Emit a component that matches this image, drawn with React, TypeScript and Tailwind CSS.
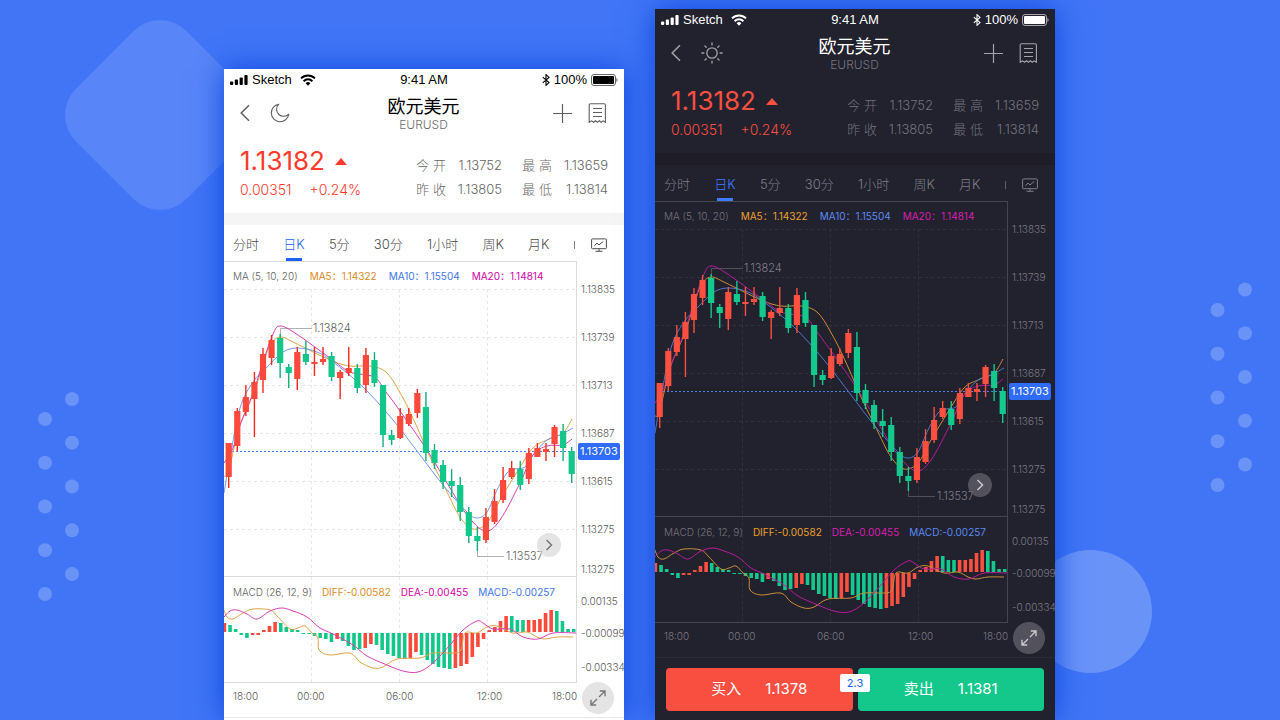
import { useState } from "react";

type Point = [number, number];
// up, body top, body bottom, wick top, wick bottom
type Candle = [boolean, number, number, number, number];

const themes = {
  light: {
    phone: "bg-white",
    status: "text-black",
    title: "text-black",
    subtitle: "text-[#6e6e6e]",
    icon: "text-[#5f5f5f]",
    price: "text-[#fb3a2b]",
    quote: "text-[#666666]",
    band: "bg-[#f5f5f5]",
    tab: "text-[#4c4c4c]",
    activeTab: "text-[#1b62ff]",
    activeBar: "bg-[#1b62ff]",
    border: "border-[#d9d9d9]",
    footer: "border-[#e8e8e8]",
    legend: "text-[#5f5f5f]",
    orange: "text-[#d98a1f]",
    blue: "text-[#3f74ea]",
    pink: "text-[#d400a5]",
    axis: "text-[#5a5a5a]",
    round: "bg-[#d8d8d8]/70 text-[#777777]",
    grid: "#e8e8e8",
    line: "#d9d9d9",
    note: "#5f5f5f",
    up: "#fb4a3c",
    down: "#13c78b",
    wickUp: "#f5281a",
    wickDown: "#0fae78",
    ma5: "#dfa345",
    ma10: "#6f9bf0",
    ma20: "#d63fb5",
  },
  dark: {
    phone: "bg-[#22212e]",
    status: "text-white",
    title: "text-white",
    subtitle: "text-[#74737d]",
    icon: "text-[#a3a3a9]",
    price: "text-[#fb4f3f]",
    quote: "text-[#74737d]",
    band: "bg-[#1d1c27]",
    tab: "text-[#7f7e88]",
    activeTab: "text-[#3b7cff]",
    activeBar: "bg-[#3b7cff]",
    border: "border-[#45444f]",
    footer: "border-[#2b2a36]",
    legend: "text-[#74737d]",
    orange: "text-[#eda22f]",
    blue: "text-[#5b8bf0]",
    pink: "text-[#d61fae]",
    axis: "text-[#7a7983]",
    round: "bg-[#5f5e68]/80 text-[#c9c9cd]",
    grid: "#31303c",
    line: "#45444f",
    note: "#7f7e88",
    up: "#fb4f3f",
    down: "#13c98d",
    wickUp: "#fb4f3f",
    wickDown: "#13c98d",
    ma5: "#c98f38",
    ma10: "#4f76c4",
    ma20: "#b81d97",
  },
};

type Theme = (typeof themes)["light"];

const candles: Candle[] = [
  [true, 181, 215, 181, 226],
  [true, 149, 184, 146, 189],
  [true, 135, 150, 123, 154],
  [true, 120, 137, 110, 175],
  [true, 92, 118, 86, 131],
  [true, 78, 96, 73, 103],
  [false, 76, 101, 72, 116],
  [false, 105, 111, 102, 126],
  [true, 90, 117, 85, 128],
  [false, 92, 100, 79, 103],
  [true, 100, 102, 85, 114],
  [true, 97, 100, 85, 103],
  [false, 94, 115, 90, 119],
  [true, 110, 116, 108, 137],
  [true, 106, 111, 85, 114],
  [false, 106, 126, 102, 131],
  [true, 93, 123, 86, 131],
  [false, 98, 121, 90, 125],
  [false, 123, 173, 123, 185],
  [false, 173, 178, 168, 183],
  [true, 154, 176, 146, 177],
  [true, 152, 162, 146, 164],
  [true, 131, 151, 127, 156],
  [false, 145, 191, 130, 199],
  [false, 188, 201, 182, 207],
  [false, 203, 220, 198, 227],
  [false, 219, 224, 207, 235],
  [false, 223, 250, 215, 259],
  [false, 250, 274, 245, 281],
  [false, 274, 279, 265, 289],
  [true, 255, 278, 246, 281],
  [true, 239, 260, 227, 262],
  [true, 218, 238, 205, 241],
  [true, 206, 215, 199, 217],
  [false, 207, 223, 199, 228],
  [true, 191, 217, 186, 222],
  [true, 186, 195, 181, 195],
  [true, 187, 190, 181, 199],
  [true, 165, 182, 163, 195],
  [false, 169, 186, 162, 199],
  [false, 189, 212, 185, 221],
];

const ma5: Point[] = [
  [0, 214], [4, 212], [10, 186], [16, 163], [29, 133], [39, 103], [46, 83], [56, 75],
  [71, 81], [106, 98], [126, 104], [146, 104], [163, 111], [179, 136], [193, 165],
  [206, 195], [223, 230], [236, 255], [249, 267], [263, 261], [276, 238], [293, 210],
  [309, 186], [323, 178], [339, 171], [348, 157],
];
const ma10: Point[] = [
  [0, 231], [6, 196], [16, 146], [29, 120], [43, 105], [59, 90], [74, 86], [93, 90],
  [109, 100], [139, 125], [169, 158], [196, 193], [219, 223], [243, 250], [253, 256],
  [263, 250], [273, 228], [283, 211], [291, 207], [301, 205], [309, 193], [323, 178],
  [336, 173], [349, 166],
];
const ma20: Point[] = [
  [0, 201], [9, 186], [16, 163], [29, 131], [39, 100], [49, 72], [56, 64], [71, 71],
  [106, 96], [126, 110], [150, 115], [162, 130], [176, 149], [203, 188], [226, 226],
  [243, 253], [261, 269], [276, 258], [296, 221], [309, 193], [323, 184], [339, 183],
  [348, 177],
];

const diff: Point[] = [
  [0, 348], [3, 355], [9, 357], [19, 351], [29, 347], [46, 348], [54, 355], [66, 367],
  [74, 366], [81, 364], [88, 371], [94, 376], [95, 388], [106, 393], [126, 391],
  [136, 400], [149, 406], [159, 405], [173, 397], [196, 396], [209, 391], [229, 391],
  [237, 388], [241, 371], [253, 371], [263, 365], [273, 364], [289, 371], [303, 370],
  [313, 375], [321, 377], [333, 375], [349, 375],
];
const dea: Point[] = [
  [0, 355], [6, 349], [13, 348], [23, 352], [33, 357], [46, 349], [58, 346], [69, 349],
  [83, 355], [96, 366], [109, 372], [129, 383], [143, 394], [163, 403], [179, 409],
  [194, 410], [209, 401], [226, 383], [239, 368], [253, 359], [259, 361], [269, 367],
  [286, 367], [299, 375], [314, 377], [329, 371], [352, 371],
];

const macd = [
  9, 7, 3, -2, -5, -2, -2, 2, 6, 10, 9, 5, 3, 2, -1, -1, -3, -5, -6, -9, -6, -8, -13,
  -17, -16, -15, -11, -12, -17, -21, -23, -25, -26, -25, -19, -22, -27, -31, -34, -35,
  -36, -35, -33, -31, -24, -14, -6, 2, 5, 11, 16, 16, 12, 12, 12, 12, 13, 19, 22, 21,
  11, 3, 3,
];
const macdUp = [
  0, 5, 6, 7, 8, 9, 20, 25, 26, 33, 34, 41, 42, 43, 44, 45, 46, 47, 48, 49, 50, 54, 55,
  56, 57, 58,
];

const tabs = ["分时", "日K", "5分", "30分", "1小时", "周K", "月K"];

const quotes = [
  ["今 开", "1.13752"],
  ["最 高", "1.13659"],
  ["昨 收", "1.13805"],
  ["最 低", "1.13814"],
];

const priceAxis = ["1.13835", "1.13739", "1.13713", "1.13687", "1.13615", "1.13275"];
const lowerAxis = ["1.13275", "0.00135", "-0.00099"];

function smooth(points: Point[]) {
  let d = `M${points[0][0]} ${points[0][1]}`;
  for (let i = 0; i < points.length - 1; i++) {
    const a = points[i - 1] ?? points[i];
    const b = points[i];
    const c = points[i + 1];
    const e = points[i + 2] ?? c;
    d += `C${b[0] + (c[0] - a[0]) / 6} ${b[1] + (c[1] - a[1]) / 6} ${
      c[0] - (e[0] - b[0]) / 6
    } ${c[1] - (e[1] - b[1]) / 6} ${c[0]} ${c[1]}`;
  }
  return d;
}

function StatusBar({ t }: { t: Theme }) {
  return (
    <div
      className={`h-[22px] px-[6px] grid grid-cols-3 items-center text-[13px] font-['Liberation_Sans',sans-serif] ${t.status}`}
    >
      <div className="flex items-center gap-1">
        <svg width="18" height="10" viewBox="0 0 18 10" fill="currentColor">
          <rect x="0" y="6.4" width="3.2" height="3.6" rx="1" />
          <rect x="4.8" y="4.6" width="3.2" height="5.4" rx="1" />
          <rect x="9.6" y="2.4" width="3.2" height="7.6" rx="1" />
          <rect x="14.4" y="0" width="3.2" height="10" rx="1" />
        </svg>
        <span>Sketch</span>
        <svg className="ml-1" width="16" height="12" viewBox="0 0 16 12" fill="none" stroke="currentColor" strokeWidth="2">
          <path d="M1 4.4a10 10 0 0 1 14 0" />
          <path d="M3.6 7.2a6.2 6.2 0 0 1 8.8 0" />
          <path d="M8 11.8 5.6 9.3a3.4 3.4 0 0 1 4.8 0Z" fill="currentColor" stroke="none" />
        </svg>
      </div>
      <div className="text-center">9:41 AM</div>
      <div className="flex items-center justify-end gap-1">
        <svg width="8" height="12" viewBox="0 0 8 12" fill="none" stroke="currentColor" strokeWidth="1.1">
          <path d="M.8 3.2 7 8.6 4 11.4V.6L7 3.4.8 8.8" />
        </svg>
        <span>100%</span>
        <svg width="27" height="12" viewBox="0 0 27 12">
          <rect x=".5" y=".5" width="24" height="11" rx="2.5" fill="none" stroke="currentColor" strokeOpacity=".6" />
          <rect x="2" y="2" width="21" height="8" rx="1" fill="currentColor" />
          <path d="M25.4 4v4c1.6-.6 1.6-3.4 0-4Z" fill="currentColor" fillOpacity=".6" />
        </svg>
      </div>
    </div>
  );
}

function Header({ t, dark }: { t: Theme; dark: boolean }) {
  return (
    <header className="h-11 pl-4 pr-[17px] grid grid-cols-3 items-center">
      <div className={`flex items-center gap-5 ${t.icon}`}>
        <button aria-label="返回">
          <svg width="10" height="18" viewBox="0 0 10 18" fill="none" stroke="currentColor" strokeWidth="1.5">
            <path d="M9 1.2 1.2 9 9 16.8" />
          </svg>
        </button>
        <button aria-label="切换主题">
          {dark ? (
            <svg width="22" height="22" viewBox="0 0 22 22" fill="none" stroke="currentColor" strokeWidth="1.3" strokeLinecap="round">
              <circle cx="11" cy="11" r="5.2" />
              <path d="M11 .9v2M11 19.1v2M.9 11h2M19.1 11h2M3.9 3.9l1.3 1.3M16.8 16.8l1.3 1.3M3.9 18.1l1.3-1.3M16.8 5.2l1.3-1.3" />
            </svg>
          ) : (
            <svg width="20" height="20" viewBox="0 0 20 20" fill="none" stroke="currentColor" strokeWidth="1.1" strokeLinejoin="round">
              <path d="M8.8 1.2a8.8 8.8 0 1 0 10 10 7 7 0 0 1-5.2 2.1 7 7 0 0 1-7-7 7 7 0 0 1 2.2-5.1Z" />
            </svg>
          )}
        </button>
      </div>
      <div className="text-center">
        <h1 className={`text-[18px] leading-6 ${t.title}`}>欧元美元</h1>
        <p className={`text-[12px] leading-3 font-light ${t.subtitle}`}>EURUSD</p>
      </div>
      <div className={`flex items-center justify-end gap-4 ${t.icon}`}>
        <button aria-label="添加">
          <svg width="19" height="19" viewBox="0 0 19 19" fill="none" stroke="currentColor" strokeWidth="1.2">
            <path d="M9.5 0v19M0 9.5h19" />
          </svg>
        </button>
        <button aria-label="订单">
          <svg width="19" height="20" viewBox="0 0 19 20" fill="none" stroke="currentColor" strokeWidth="1.1">
            <path d="M1.2 19.3V2Q1.2.7 2.5.7h13.6q1.3 0 1.3 1.3v17.3l-2.3-1.5-1.9 1.4-1.9-1.4-1.9 1.4-1.9-1.4-1.9 1.4-2-1.4Z" />
            <path d="M5 5.5h9M5 9.5h9M5 13.5h9" />
          </svg>
        </button>
      </div>
    </header>
  );
}

function Summary({ t }: { t: Theme }) {
  return (
    <section className="h-[78px] px-4 pt-[10px] flex justify-between">
      <div className={t.price}>
        <div className="flex items-center gap-[10px] text-[26px] leading-8">
          1.13182
          <svg width="12" height="7" viewBox="0 0 12 7" fill="currentColor">
            <path d="M6 0 12 7H0Z" />
          </svg>
        </div>
        <div className="flex gap-[18px] text-[14px] leading-[26px] font-light">
          <span>0.00351</span>
          <span>+0.24%</span>
        </div>
      </div>
      <div className={`pt-2 w-48 grid grid-cols-[30px_56px_50px_56px] h-min text-[13px] leading-6 font-light text-right ${t.quote}`}>
        {quotes.map(([label, value]) => (
          <div key={label} className="contents">
            <span className="whitespace-nowrap">{label}</span>
            <span>{value}</span>
          </div>
        ))}
      </div>
    </section>
  );
}

function Tabs({ t }: { t: Theme }) {
  const [active, setActive] = useState("日K");

  return (
    <nav className="h-9 pl-[9px] pr-[17px] flex justify-between text-[13px] font-light">
      {tabs.map((tab) => (
        <button
          key={tab}
          onClick={() => setActive(tab)}
          className={`relative h-full pt-[3px] ${tab === active ? t.activeTab : t.tab}`}
        >
          {tab}
          {tab === active && (
            <span className={`absolute bottom-0 inset-x-0 mx-auto w-4 h-[3px] ${t.activeBar}`} />
          )}
        </button>
      ))}
      <span className={`self-center w-px h-2 mt-1 bg-current opacity-70 ${t.tab}`} />
      <button aria-label="指标" className={`-ml-2 pt-[3px] ${t.tab}`}>
        <svg width="16" height="14" viewBox="0 0 16 14" fill="none" stroke="currentColor" strokeWidth="1">
          <rect x=".6" y=".9" width="14.8" height="9.8" rx=".8" />
          <path d="m3.4 7.7 2.6-2.6 2 1.8 4.2-3.4M8 10.7V13M4.5 13.3h7" />
        </svg>
      </button>
    </nav>
  );
}

function ChartDrawing({ t }: { t: Theme }) {
  return (
    <svg className="[grid-area:1/1] w-full" viewBox="0 0 352 420" fill="none">
      <g stroke={t.grid} strokeDasharray="3 3">
        {[27, 75, 123, 171, 219, 267].map((y) => (
          <path key={y} d={`M0 ${y + 0.5}H352`} />
        ))}
        {[87, 175, 263].map((x) => (
          <path key={x} d={`M${x + 0.5} 27V420`} />
        ))}
      </g>
      <path d="M0 314.5H352" stroke={t.line} />
      <path d="M8 189.5H352" stroke="#4a80f5" strokeDasharray="2 2" />
      <path d="M56.5 75V66.5H88M253.5 289V294.5H280" stroke={t.note} strokeOpacity=".5" />
      <path d={smooth(ma5)} stroke={t.ma5} />
      <path d={smooth(ma10)} stroke={t.ma10} />
      <path d={smooth(ma20)} stroke={t.ma20} />
      {candles.map(([up, top, bottom, high, low], i) => {
        const x = 4.7 + i * 8.575;
        return (
          <g key={i}>
            <path d={`M${x} ${high}V${low}`} stroke={up ? t.wickUp : t.wickDown} strokeWidth="1.4" />
            <rect x={x - 3.1} y={top} width="6.2" height={bottom - top} fill={up ? t.up : t.down} />
          </g>
        );
      })}
      <g fill={t.note} fontSize="11" fontWeight="300">
        <text x="89" y="70">1.13824</text>
        <text x="282" y="298">1.13537</text>
      </g>
      {macd.map((value, i) => (
        <rect
          key={i}
          x={i * 5.634 - 1.4}
          y={value > 0 ? 370 - value : 371}
          width="3.6"
          height={Math.abs(value)}
          fill={macdUp.includes(i) ? t.up : t.down}
        />
      ))}
      <path d={smooth(diff)} stroke={t.ma5} />
      <path d={smooth(dea)} stroke={t.ma20} />
    </svg>
  );
}

function Chart({ t }: { t: Theme }) {
  return (
    <section className="flex">
      <div className={`grow grid border-t border-r border-b ${t.border}`}>
        <ChartDrawing t={t} />
        <div className="[grid-area:1/1] relative pl-[9px] text-[10px]">
          <div className="flex gap-3 h-[28px] items-center">
            <span className={`font-light ${t.legend}`}>MA (5, 10, 20)</span>
            <span className={t.orange}>MA5：1.14322</span>
            <span className={t.blue}>MA10：1.15504</span>
            <span className={t.pink}>MA20：1.14814</span>
          </div>
          <div className="flex gap-[10px] h-[28px] mt-[288px] items-center">
            <span className={`font-light ${t.legend}`}>MACD (26, 12, 9)</span>
            <span className={t.orange}>DIFF:-0.00582</span>
            <span className={t.pink}>DEA:-0.00455</span>
            <span className={t.blue}>MACD:-0.00257</span>
          </div>
          <button
            aria-label="下一页"
            className={`absolute right-[15px] top-[271px] size-6 rounded-full flex items-center justify-center ${t.round}`}
          >
            <svg width="8" height="12" viewBox="0 0 8 12" fill="none" stroke="currentColor" strokeWidth="1.5">
              <path d="m1.5 1 5 5-5 5" />
            </svg>
          </button>
        </div>
      </div>
      <div className={`relative w-[47px] pl-1 pt-1 -mb-2 text-[10px] font-light ${t.axis}`}>
        {priceAxis.map((label) => (
          <div key={label} className="h-12 flex items-center">{label}</div>
        ))}
        {lowerAxis.map((label) => (
          <div key={label} className="h-8 flex items-center">{label}</div>
        ))}
        <div className="h-9 flex items-center">-0.00334</div>
        <span className="absolute left-px top-[182px] h-[17px] px-[2px] rounded-xs bg-[#2f6cfb] text-[11px] leading-[17px] font-normal text-white">
          1.13703
        </span>
      </div>
    </section>
  );
}

function TimeAxis({ t }: { t: Theme }) {
  return (
    <div className={`h-[34px] pl-[9px] pr-[10px] flex justify-between text-[10px] leading-[26px] font-light ${t.axis}`}>
      <div className="grid grid-cols-[64px_89px_91px_75px_auto]">
        <span>18:00</span>
        <span>00:00</span>
        <span>06:00</span>
        <span>12:00</span>
        <span>18:00</span>
      </div>
      <button aria-label="全屏" className={`relative size-8 -mt-px rounded-full flex items-center justify-center ${t.round}`}>
        <svg width="16" height="16" viewBox="0 0 16 16" fill="none" stroke="currentColor" strokeWidth="1.4">
          <path d="M9.8 1H15v5.2M15 1 9 7M6.2 15H1V9.8M1 15l6-6" />
        </svg>
      </button>
    </div>
  );
}

function TradeBar() {
  return (
    <div className="relative flex gap-[5px] px-[11px] pt-[10px] text-white text-[15px]">
      <button className="grow basis-0 h-[43px] rounded-sm bg-[#f94f40] flex items-center justify-center gap-6">
        <span>买入</span>
        <span>1.1378</span>
      </button>
      <button className="grow basis-0 h-[43px] rounded-sm bg-[#14c88c] flex items-center justify-center gap-6">
        <span>卖出</span>
        <span>1.1381</span>
      </button>
      <span className="absolute top-4 inset-x-0 mx-auto w-[30px] h-[18px] rounded-xs bg-white text-center text-[11px] leading-[18px] text-[#1b62ff]">
        2.3
      </span>
    </div>
  );
}

function Phone({ dark = false }: { dark?: boolean }) {
  const t = dark ? themes.dark : themes.light;

  return (
    <article className={`w-[400px] shadow-[0_0_28px_#0b48dd] ${t.phone}`}>
      <StatusBar t={t} />
      <Header t={t} dark={dark} />
      <Summary t={t} />
      <div className={`h-3 ${t.band}`} />
      <Tabs t={t} />
      <Chart t={t} />
      <TimeAxis t={t} />
      <footer className={`border-t ${t.footer}`}>{dark && <TradeBar />}</footer>
    </article>
  );
}

function Backdrop() {
  return (
    <svg className="absolute inset-0 size-full" viewBox="0 0 1280 720" preserveAspectRatio="xMidYMid slice" fill="#fff">
      <rect x="82" y="37" width="156" height="156" rx="37" transform="rotate(45 160 115)" fillOpacity=".12" />
      <circle cx="1090.5" cy="611.5" r="61.5" fillOpacity=".22" />
      {[0, 1, 2, 3, 4].map((i) => (
        <g key={i} fillOpacity=".22">
          <circle cx="72" cy={399 + i * 43.75} r="7" />
          <circle cx="45" cy={419 + i * 43.75} r="7" />
          <circle cx="1245" cy={289.5 + i * 43.75} r="7" />
          <circle cx="1217.5" cy={310 + i * 43.75} r="7" />
        </g>
      ))}
    </svg>
  );
}

export default function App() {
  return (
    <main className="relative h-screen overflow-hidden bg-[#4175f6] font-['Inter','Noto_Sans_CJK_SC',sans-serif]">
      <Backdrop />
      <div className="relative h-full flex justify-center gap-[31px] pr-px">
        <div className="flex pt-[69px]">
          <Phone />
        </div>
        <div className="flex pt-[9px]">
          <Phone dark />
        </div>
      </div>
    </main>
  );
}
